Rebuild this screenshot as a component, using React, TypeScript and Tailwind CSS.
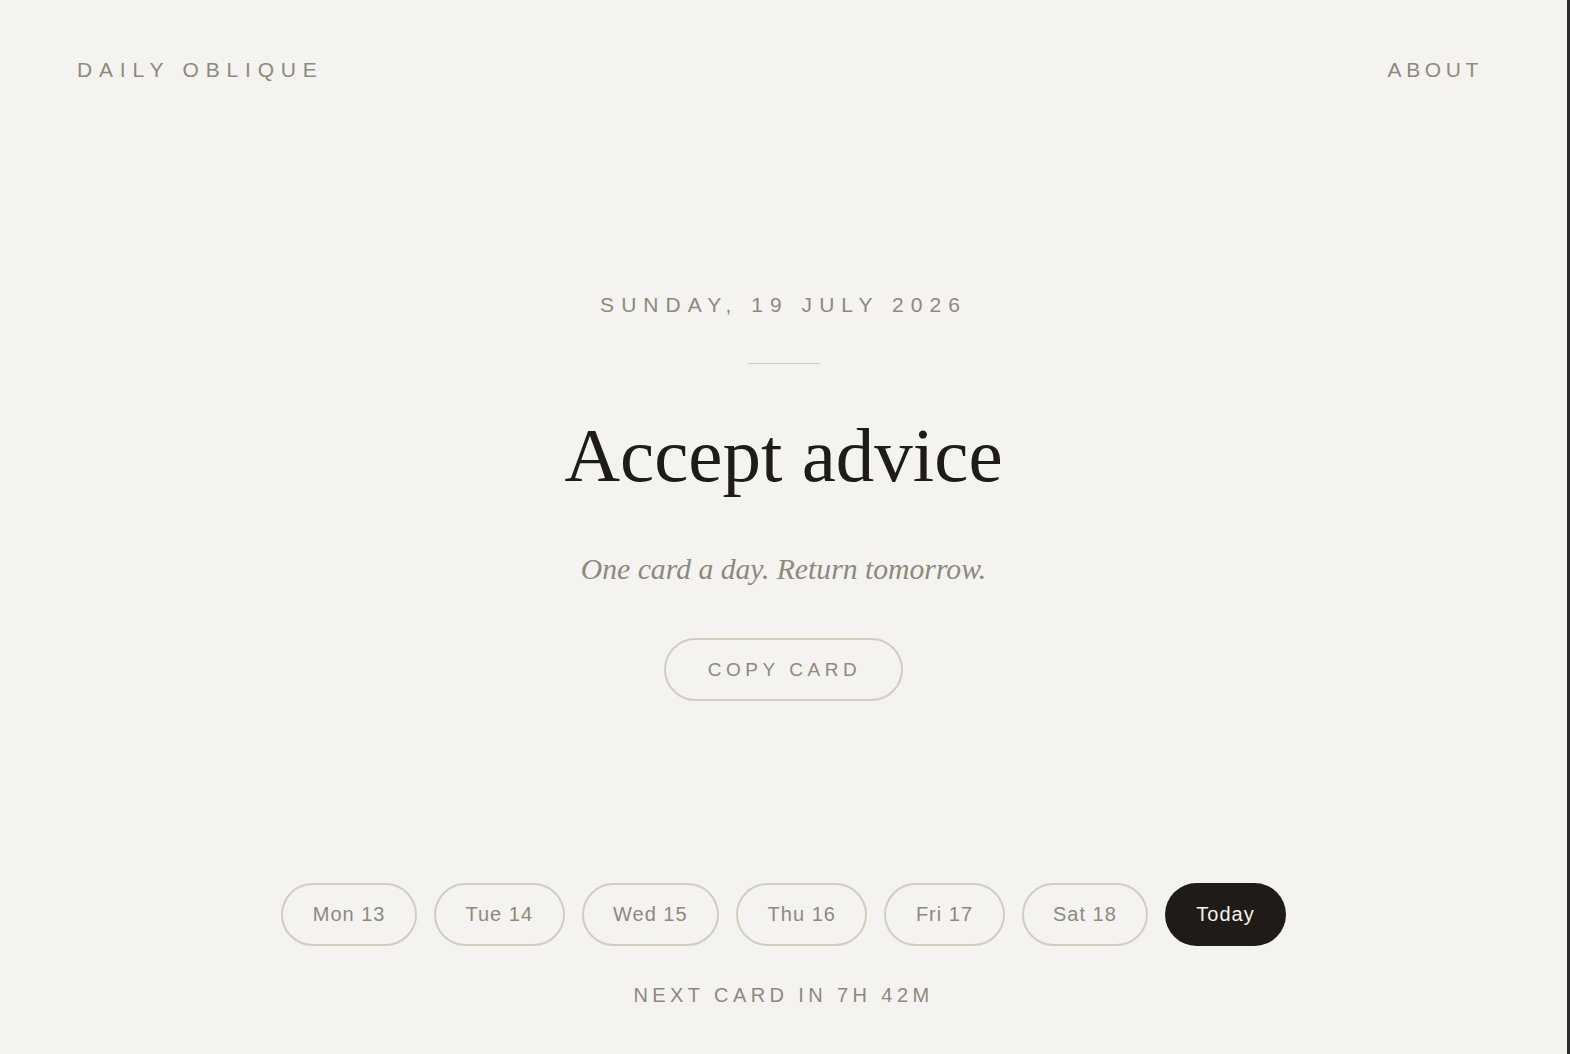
import React from "react";

const DAYS = ["Mon 13", "Tue 14", "Wed 15", "Thu 16", "Fri 17", "Sat 18"];

const sans = "font-['Liberation_Sans',Arial,sans-serif]";
const serif = "font-['Liberation_Serif','Times_New_Roman',serif]";

const App = () => {
  const [copied, setCopied] = React.useState(false);

  return (
    <div className="flex min-h-[1054px] w-full bg-[#f4f3ef]">
      <div className={`flex flex-1 flex-col ${sans} text-[#8e897b]`}>
        {/* header */}
        <header className="flex items-start justify-between pl-[77px] pr-[84px] pt-[59px]">
          <span className="text-[21px] leading-none tracking-[0.325em]">DAILY OBLIQUE</span>
          <a href="#" className="text-[21px] leading-none tracking-[0.22em]">ABOUT</a>
        </header>

        <main className="flex flex-col items-center">
          <p className="mt-[214px] text-[21px] leading-none tracking-[0.335em]">
            SUNDAY, 19 JULY 2026
          </p>
          <div className="mt-[48px] h-px w-[72px] bg-[#d3ccbd]" />

          <h1 className={`mt-[53px] ${serif} text-[77px] leading-none text-[#1f1c18]`}>
            Accept advice
          </h1>
          <p className={`mt-[61px] ${serif} text-[29.7px] italic leading-none text-[#8e897b]`}>
            One card a day. Return tomorrow.
          </p>

          <button
            onClick={() => setCopied(true)}
            className="mt-[53px] flex h-[63px] items-center rounded-full border-2 border-[#d4cdbf] pl-[42px] pr-[40px] text-[19px] leading-none tracking-[0.24em]"
          >
            {copied ? "COPIED" : "COPY CARD"}
          </button>

          {/* week strip */}
          <div className="mt-[182px] flex gap-[17px]">
            {DAYS.map((d) => (
              <button
                key={d}
                className="flex h-[63px] items-center rounded-full border-2 border-[#d4cdbf] px-[29.5px] text-[20px] leading-none tracking-[0.05em]"
              >
                {d}
              </button>
            ))}
            <button className="flex h-[63px] items-center rounded-full bg-[#1f1c18] px-[31px] text-[20px] leading-none tracking-[0.05em] text-[#f4f3ef]">
              Today
            </button>
          </div>

          <p className="mt-[39px] text-[20px] leading-none tracking-[0.22em]">
            NEXT CARD IN 7H 42M
          </p>
        </main>
      </div>
      <div className="w-[3px] shrink-0 bg-[#2c2c2c]" />
    </div>
  );
};

export default App;
